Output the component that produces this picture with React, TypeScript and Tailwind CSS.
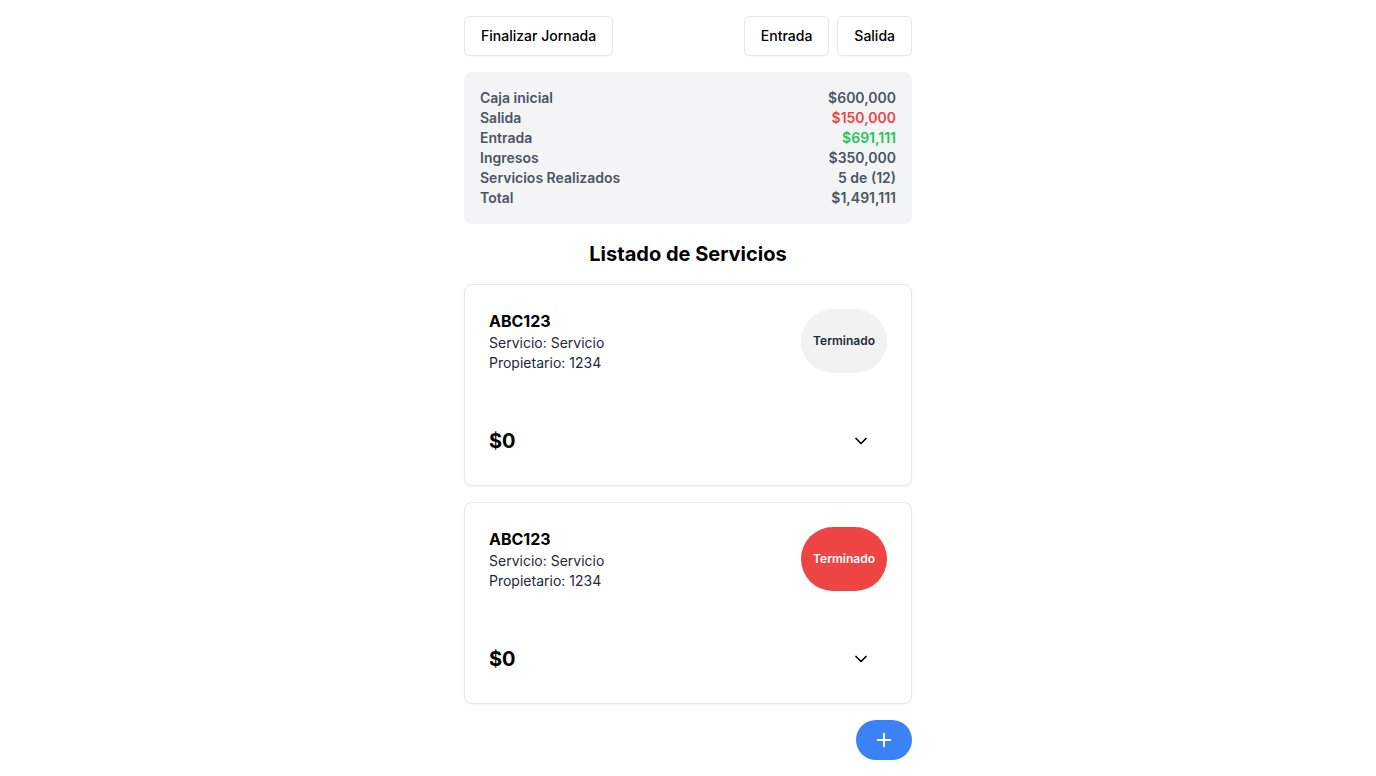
import { ChevronDown, Plus } from 'lucide-react';

interface Servicio {
  placa: string;
  servicio: string;
  propietario: string;
  total: string;
  estado: 'gris' | 'rojo';
}

const resumen = [
  { label: 'Caja inicial', value: '$600,000', color: 'text-[#4b5563]' },
  { label: 'Salida', value: '$150,000', color: 'text-[#ef4444]' },
  { label: 'Entrada', value: '$691,111', color: 'text-[#22c55e]' },
  { label: 'Ingresos', value: '$350,000', color: 'text-[#4b5563]' },
  { label: 'Servicios Realizados', value: '5 de (12)', color: 'text-[#4b5563]' },
  { label: 'Total', value: '$1,491,111', color: 'text-[#4b5563]' },
];

const servicios: Servicio[] = [
  { placa: 'ABC123', servicio: 'Servicio', propietario: '1234', total: '$0', estado: 'gris' },
  { placa: 'ABC123', servicio: 'Servicio', propietario: '1234', total: '$0', estado: 'rojo' },
];

const App = () => {
  return (
    <div className="min-h-screen bg-white font-['Inter',sans-serif] text-black">
      <div className="max-w-md mx-auto py-4">
        <div className="flex justify-between">
          <button className="h-10 px-4 border border-[#e5e7eb] rounded-md text-sm font-medium bg-white shadow-[0_1px_2px_rgba(0,0,0,0.04)]">
            Finalizar Jornada
          </button>
          <div className="flex gap-2">
            <button className="h-10 px-4 border border-[#e5e7eb] rounded-md text-sm font-medium bg-white shadow-[0_1px_2px_rgba(0,0,0,0.04)]">
              Entrada
            </button>
            <button className="h-10 px-4 border border-[#e5e7eb] rounded-md text-sm font-medium bg-white shadow-[0_1px_2px_rgba(0,0,0,0.04)]">
              Salida
            </button>
          </div>
        </div>

        <div className="mt-4 bg-[#f3f4f6] rounded-lg p-4">
          {resumen.map((row) => (
            <div key={row.label} className="flex justify-between text-sm leading-5 font-semibold">
              <span className="text-[#4b5563]">{row.label}</span>
              <span className={row.color}>{row.value}</span>
            </div>
          ))}
        </div>

        <h2 className="mt-4 mb-4 text-xl leading-7 font-bold text-center text-black">
          Listado de Servicios
        </h2>

        <div className="flex flex-col gap-4">
          {servicios.map((s, index) => (
            <div
              key={index}
              className="border border-[#e5e7eb] rounded-lg shadow-[0_1px_2px_rgba(0,0,0,0.05)] p-6 bg-white"
            >
              <div className="flex justify-between items-start">
                <div>
                  <div className="text-base leading-6 font-bold text-black">{s.placa}</div>
                  <div className="text-sm leading-5 text-[#1f2937]">Servicio: {s.servicio}</div>
                  <div className="text-sm leading-5 text-[#1f2937]">Propietario: {s.propietario}</div>
                </div>
                <div
                  className={
                    s.estado === 'rojo'
                      ? 'h-16 px-3 rounded-full flex items-center text-xs font-semibold bg-[#ef4444] text-white'
                      : 'h-16 px-3 rounded-full flex items-center text-xs font-semibold bg-[#f2f2f2] text-[#1f2937]'
                  }
                >
                  Terminado
                </div>
              </div>
              <div className="mt-[48px] flex justify-between items-center h-10">
                <span className="text-xl font-bold text-black">{s.total}</span>
                <button className="h-10 px-4 flex items-center">
                  <ChevronDown size={20} strokeWidth={2} className="text-black" />
                </button>
              </div>
            </div>
          ))}
        </div>

        <div className="mt-4 flex justify-end">
          <button className="h-10 w-14 rounded-full bg-[#3b82f6] text-white flex items-center justify-center">
            <Plus size={22} strokeWidth={2} />
          </button>
        </div>
      </div>
    </div>
  );
};

export default App;
